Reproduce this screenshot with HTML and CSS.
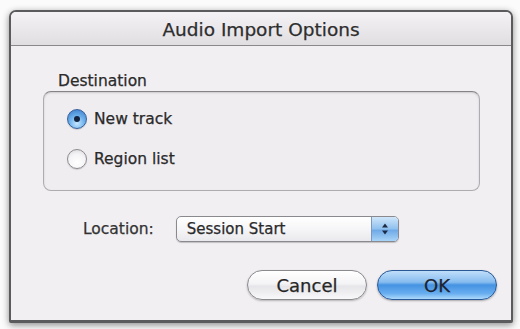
FILE: index.html
```html
<!DOCTYPE html>
<html>
<head>
<meta charset="utf-8">
<link rel="stylesheet" href="styles.css">
</head>
<body>
<div class="window">
  <div class="titlebar">Audio Import Options</div>
  <div class="content">
    <div class="group-label">Destination</div>
    <div class="group">
      <label class="radio-row">
        <span class="radio radio-on"><span class="dot"></span></span>
        <span class="radio-text">New track</span>
      </label>
      <label class="radio-row">
        <span class="radio"></span>
        <span class="radio-text">Region list</span>
      </label>
    </div>
    <div class="location-row">
      <span class="location-label">Location:</span>
      <div class="popup">
        <span class="popup-text">Session Start</span>
        <span class="popup-arrows">
          <svg width="10" height="14" viewBox="0 0 10 14"><path d="M5 1.5 L8 5.5 L2 5.5 Z" fill="#1d2a44"/><path d="M5 12.5 L8 8.5 L2 8.5 Z" fill="#1d2a44"/></svg>
        </span>
      </div>
    </div>
    <div class="buttons">
      <div class="btn btn-cancel">Cancel</div>
      <div class="btn btn-ok">OK</div>
    </div>
  </div>
</div>
</body>
</html>
```

FILE: styles.css
```css
html, body {
  margin: 0;
  padding: 0;
  background: #fbfbfb;
}
body {
  width: 520px;
  height: 329px;
  overflow: hidden;
  font-family: "DejaVu Sans", "Liberation Sans", sans-serif;
  color: #2a2a2a;
  -webkit-text-stroke: 0.25px currentColor;
}
.window {
  margin: 10px 0 0 9px;
  width: 500px;
  height: 308px;
  border: 2px solid #5b5b5e;
  border-bottom-width: 3px;
  border-radius: 7px 7px 2px 2px;
  background: #f2eff3;
  box-shadow: 0 2px 7px rgba(0,0,0,0.45);
  display: flex;
  flex-direction: column;
  overflow: hidden;
}
.titlebar {
  flex: none;
  height: 34px;
  box-sizing: border-box;
  padding-top: 1px;
  border-bottom: 1px solid #8a888c;
  background: linear-gradient(#f4f2f5, #e0dee1);
  display: flex;
  align-items: center;
  justify-content: center;
  font-size: 18.5px;
  color: #2e2e2e;
}
.content {
  flex: 1;
  display: flex;
  flex-direction: column;
  padding: 26px 31px 0 32px;
}
.group-label {
  font-size: 15.5px;
  line-height: 18px;
  margin-left: 15px;
  margin-bottom: 1px;
}
.group {
  height: 100px;
  box-sizing: border-box;
  border: 1px solid #aeacb0;
  border-top-color: #858387;
  border-radius: 8px;
  box-shadow: inset 0 1px 2px rgba(0,0,0,0.15);
  background: #f0edf1;
  padding: 16px 0 0 23px;
  display: flex;
  flex-direction: column;
  gap: 18px;
}
.radio-row {
  display: flex;
  align-items: center;
  height: 22px;
  gap: 7px;
}
.radio {
  width: 20px;
  height: 20px;
  box-sizing: border-box;
  border-radius: 50%;
  border: 1px solid #8d8b90;
  background: radial-gradient(circle at 50% 70%, #ffffff 0%, #f4f4f6 55%, #d4d3d7 100%);
  box-shadow: 0 1px 1px rgba(0,0,0,0.15);
  display: flex;
  align-items: center;
  justify-content: center;
}
.radio-on {
  border-color: #37609c;
  background: radial-gradient(circle at 50% 75%, #c6e6ff 0%, #6fb2ec 45%, #3576c8 100%);
}
.dot {
  width: 6px;
  height: 6px;
  border-radius: 50%;
  background: #13223d;
}
.radio-text {
  font-size: 15.5px;
  color: #2a2a2a;
}
.location-row {
  display: flex;
  align-items: center;
  margin-top: 25px;
  margin-left: 40px;
  gap: 22px;
}
.location-label {
  font-size: 15.5px;
  color: #333;
}
.popup {
  width: 223px;
  height: 26px;
  box-sizing: border-box;
  border: 1px solid #8a898e;
  border-radius: 5px;
  background: linear-gradient(#ffffff, #f6f6f8 50%, #e9e8ec);
  box-shadow: 0 1px 1px rgba(0,0,0,0.2);
  display: flex;
  align-items: center;
  overflow: hidden;
}
.popup-text {
  flex: 1;
  font-size: 15px;
  padding-left: 10px;
  color: #2a2a2a;
}
.popup-arrows {
  width: 26px;
  height: 100%;
  display: flex;
  align-items: center;
  justify-content: center;
  border-left: 1px solid #7d98bf;
  background: linear-gradient(#cfe6fa, #8fc0ee 50%, #6ea9e6 55%, #a8d4f8);
}
.buttons {
  display: flex;
  justify-content: flex-end;
  gap: 10px;
  margin-top: 28px;
  margin-right: -17px;
}
.btn {
  width: 120px;
  height: 30px;
  box-sizing: border-box;
  border-radius: 15px;
  display: flex;
  align-items: center;
  justify-content: center;
  font-size: 18px;
  color: #262626;
}
.btn-cancel {
  border: 1px solid #8a898d;
  background: linear-gradient(#ffffff, #f4f4f6 45%, #e6e5e9 55%, #f8f8fa);
  box-shadow: 0 1px 2px rgba(0,0,0,0.25);
}
.btn-ok {
  border: 1px solid #285896;
  background: linear-gradient(#c0defa, #86bcef 40%, #4592e2 50%, #68aef0 80%, #acd8fb);
  box-shadow: 0 1px 2px rgba(0,0,0,0.3);
  color: #1d2330;
}
```
